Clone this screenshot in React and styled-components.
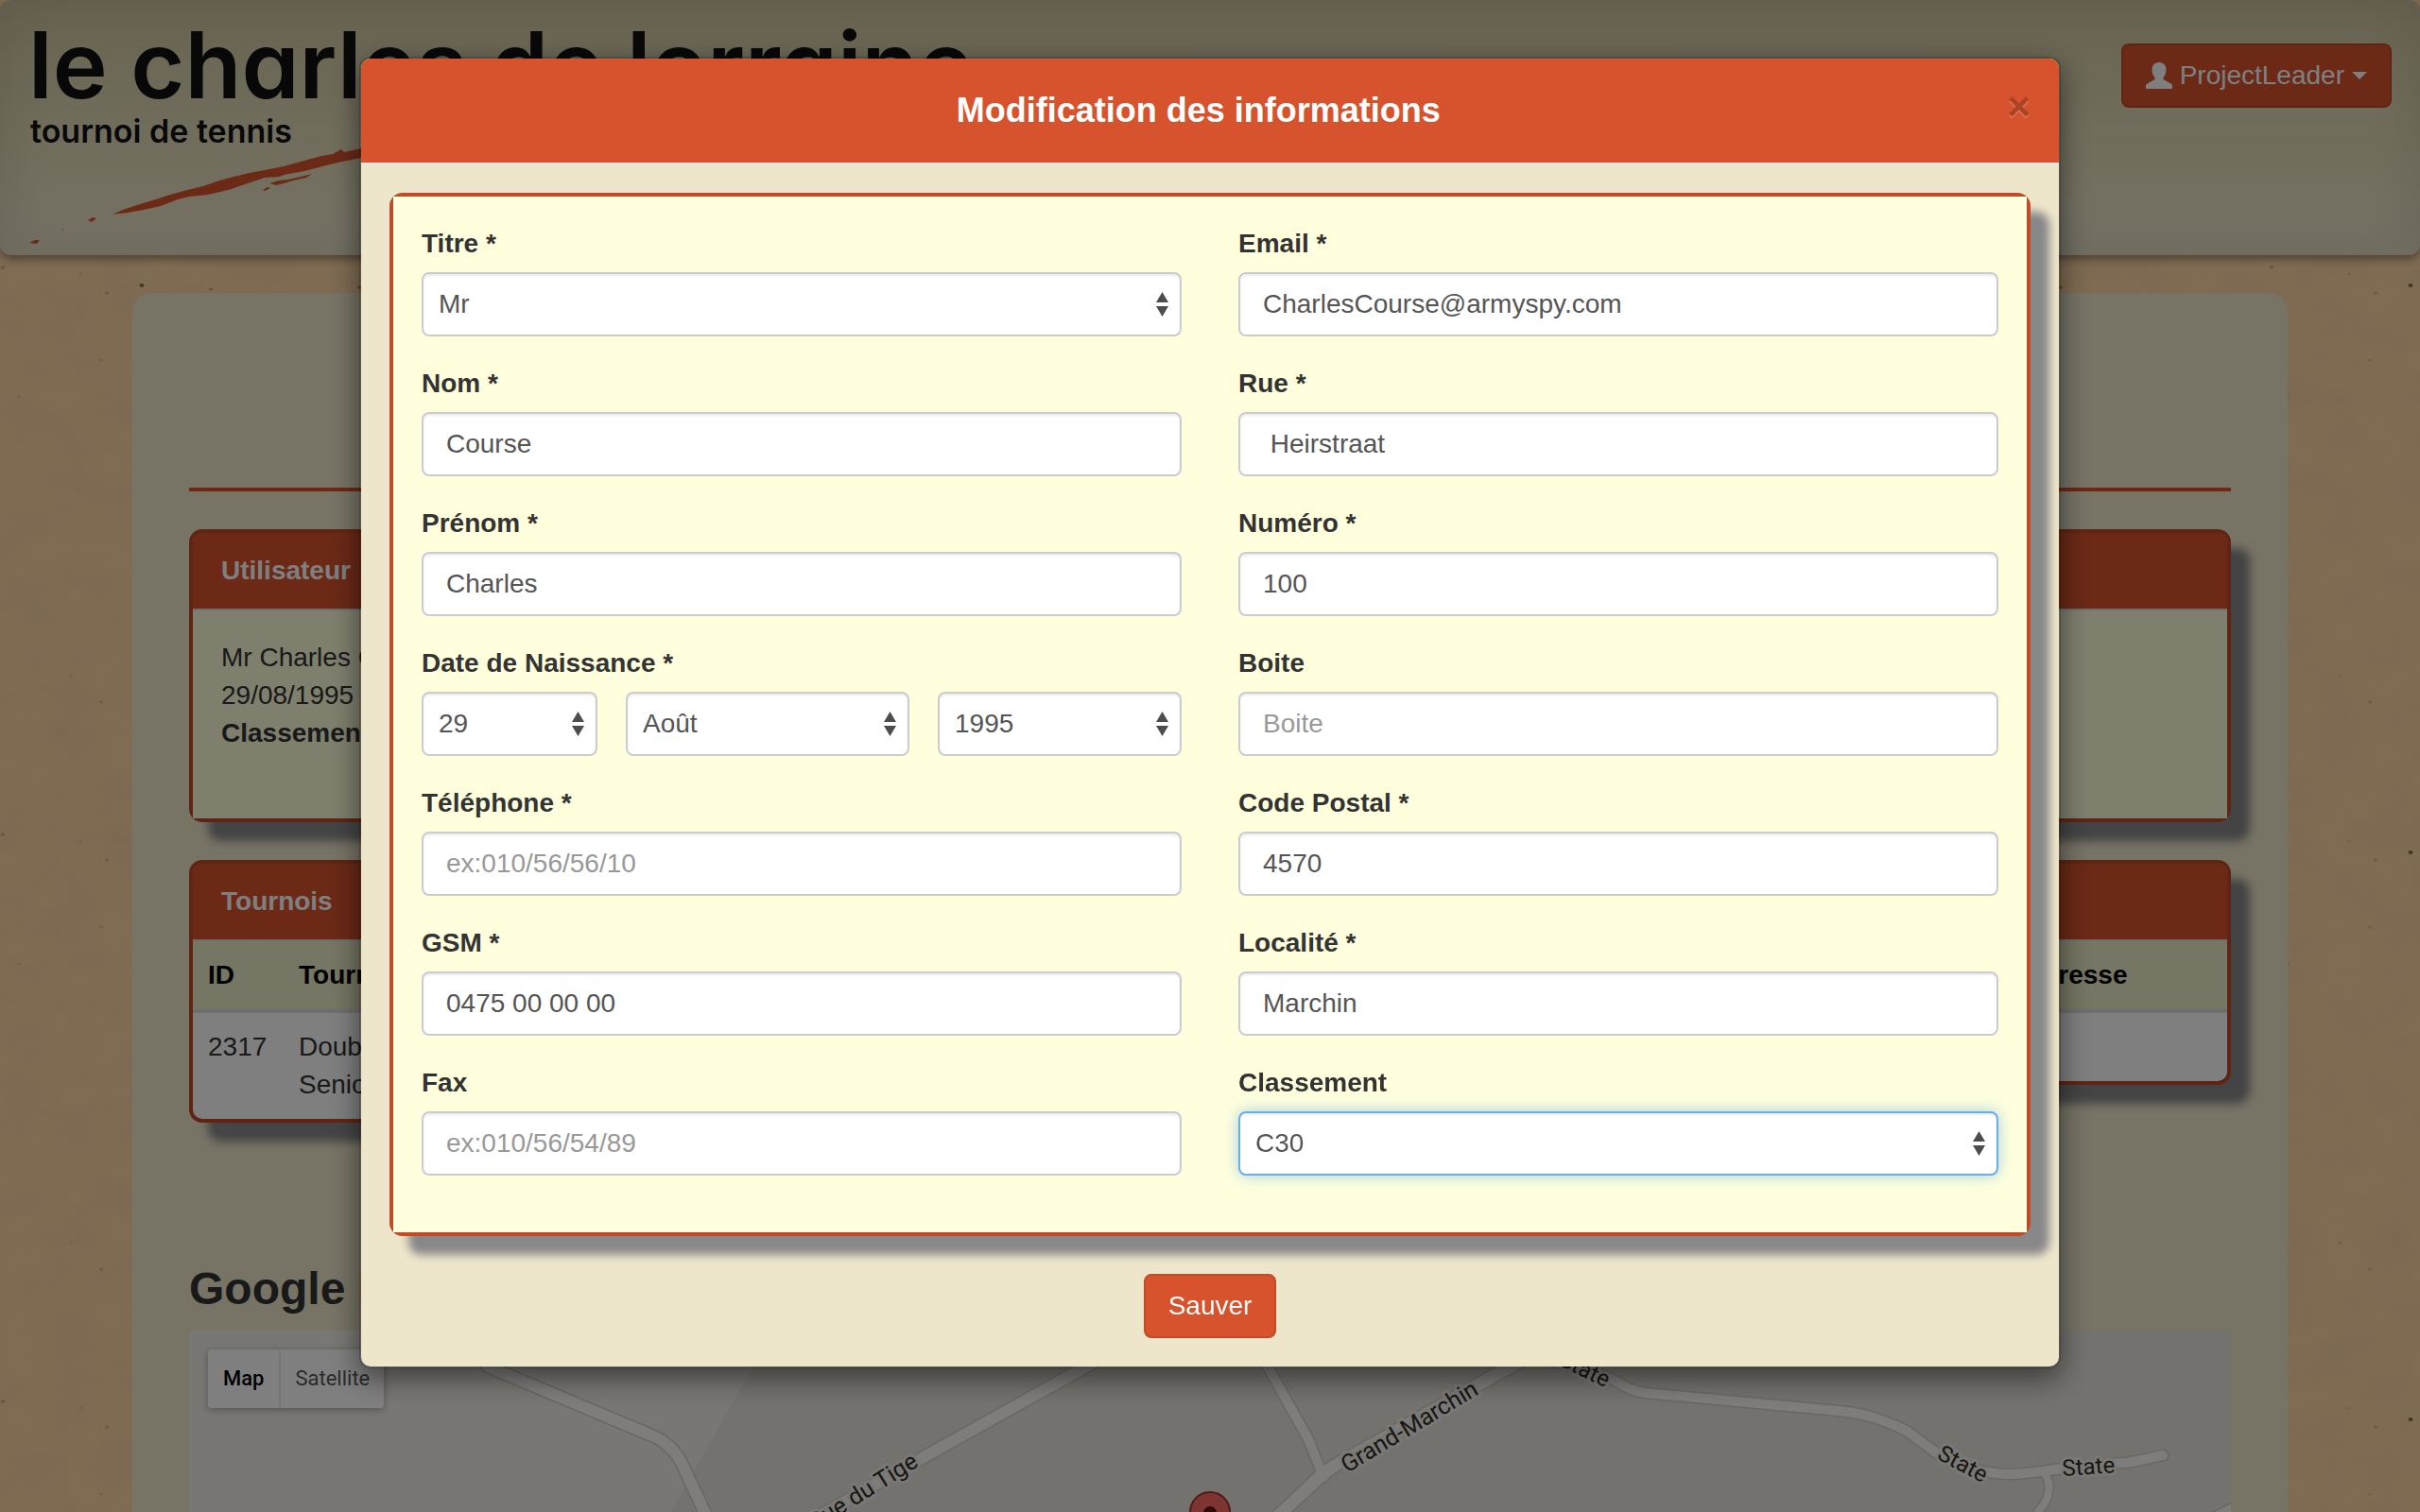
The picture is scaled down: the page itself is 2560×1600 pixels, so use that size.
import React from "react";
import styled, { createGlobalStyle, css } from "styled-components";

const orange = "#d6532d";
const rust = "#bf4b28";
const sand = "#eee6cb";
const cream = "#ffffdd";

const GlobalStyle = createGlobalStyle`
  *, *::before, *::after { box-sizing: border-box; }
  html, body, #root { height: 100%; }
  body {
    margin: 0;
    overflow: hidden;
    background: #ffd8a6;
    color: #333;
    font: 28px/40px "Liberation Sans", Arial, sans-serif;
  }
  input, select, button { font: inherit; }
`;

/* ---------- page ---------- */

const Page = styled.div`
  position: relative;
  display: flex;
  flex-direction: column;
  min-height: 100vh;
  height: 100vh;
  overflow: hidden;
`;

const Texture = styled.svg`
  position: absolute;
  inset: 0;
  width: 100%;
  height: 100%;
`;

const Banner = styled.header`
  position: relative;
  display: flex;
  justify-content: space-between;
  align-items: flex-start;
  flex: none;
  height: 270px;
  border-radius: 12px;
  background: linear-gradient(#d2c7a2, #e0dab8 50%, #ece5cc);
  box-shadow: inset 0 0 60px rgba(0, 0, 0, 0.1), 0 4px 10px rgba(0, 0, 0, 0.4);
`;

const Brand = styled.a`
  display: flex;
  flex-direction: column;
  padding: 12px 0 0 30px;
  color: #111;
  text-decoration: none;
  font-family: Inter, "Liberation Sans", sans-serif;
  font-feature-settings: "cv11";
  font-weight: 600;
`;

const BrandName = styled.span`
  font-size: 98px;
  line-height: 114px;
  white-space: nowrap;
`;

const BrandLine = styled.span`
  padding-left: 2px;
  font-size: 34px;
  line-height: 26px;
`;

const Brush = styled.svg`
  width: 500px;
  height: 110px;
  margin-left: -30px;
`;

const Button = styled.button`
  display: inline-flex;
  align-items: center;
  gap: 8px;
  height: 68px;
  padding: 0 24px;
  border: 2px solid ${rust};
  border-radius: 8px;
  background: ${orange};
  color: #fff;
  line-height: 40px;
  cursor: pointer;
`;

const Account = styled.div`
  padding: 46px 30px 0 0;
`;

const Content = styled.main`
  position: relative;
  display: flex;
  flex-direction: column;
  flex: 1;
  min-height: 0;
  margin: 40px 140px 0;
  padding: 0 60px;
  border-radius: 20px 20px 0 0;
  background: ${sand};
`;

const PageHeader = styled.div`
  flex: none;
  height: 210px;
  margin-bottom: 40px;
  border-bottom: 4px solid ${orange};
`;

const Columns = styled.div`
  display: grid;
  grid-template-columns: 1fr 1fr;
  align-items: start;
  gap: 40px 60px;
`;

const Panel = styled.section`
  border: 4px solid ${rust};
  border-radius: 14px;
  background: ${(p) => p.$fill || cream};
  box-shadow: 20px 20px 10px #888;
`;

const PanelTitle = styled.h2`
  margin: 0;
  padding: 20px 30px;
  border-bottom: 2px solid #ddd;
  border-radius: 8px 8px 0 0;
  background: ${orange};
  color: #fff;
  font-size: 28px;
  line-height: 40px;
`;

const PanelBody = styled.div`
  min-height: 220px;
  padding: 30px;
  background: ${cream};
`;

const Table = styled.table`
  width: 100%;
  border-collapse: separate;
  border-spacing: 0;
  table-layout: fixed;
  text-align: left;
`;

const Th = styled.th`
  width: ${(p) => p.$width || "auto"};
  padding: 16px;
  border-bottom: 4px solid #ddd;
  background: #ebecc6;
  color: #000;
`;

const Td = styled.td`
  height: 72px;
  padding: 16px;
  vertical-align: top;
`;

const SectionTitle = styled.h3`
  flex: none;
  margin: 150px 0 18px;
  font-size: 48px;
  line-height: 52px;
`;

const MapFrame = styled.div`
  position: relative;
  flex: 1;
  min-height: 0;
  overflow: hidden;
  background: #e7e4dc;
`;

const MapDrawing = styled.svg`
  display: block;
  width: 100%;
  height: 100%;
  font-family: Roboto, sans-serif;
`;

const MapTypes = styled.div`
  position: absolute;
  top: 20px;
  left: 20px;
  display: flex;
  border-radius: 4px;
  box-shadow: 0 2px 8px rgba(0, 0, 0, 0.3);
`;

const MapType = styled.button`
  height: 62px;
  padding: 0 ${(p) => (p.$on ? 16 : 15)}px;
  border: 0;
  border-left: ${(p) => (p.$on ? "0" : "2px solid #ececec")};
  border-radius: ${(p) => (p.$on ? "4px 0 0 4px" : "0 4px 4px 0")};
  background: #fff;
  color: ${(p) => (p.$on ? "#000" : "#565656")};
  font-family: Roboto, sans-serif;
  font-size: 22px;
  font-weight: ${(p) => (p.$on ? 500 : 400)};
`;

/* ---------- dialog ---------- */

const Backdrop = styled.div`
  position: fixed;
  inset: 0;
  display: flex;
  justify-content: center;
  align-items: flex-start;
  padding: 60px 20px;
  background: rgba(0, 0, 0, 0.5);
`;

const Dialog = styled.form`
  width: 100%;
  max-width: 1800px;
  border: 2px solid rgba(0, 0, 0, 0.2);
  border-radius: 12px;
  background: ${sand};
  background-clip: padding-box;
  box-shadow: 0 10px 30px rgba(0, 0, 0, 0.5);
`;

const DialogHeader = styled.div`
  display: flex;
  align-items: flex-start;
  padding: 30px;
  border-bottom: 2px solid #e5e5e5;
  border-radius: 10px 10px 0 0;
  background: ${orange};
`;

const DialogTitle = styled.h1`
  flex: 1;
  margin: 0;
  color: #fff;
  font-size: 36px;
  line-height: 50px;
  text-align: center;
`;

const Close = styled.button`
  padding: 0;
  border: 0;
  background: none;
  color: #000;
  font-size: 42px;
  font-weight: bold;
  line-height: 42px;
  text-shadow: 0 2px 0 #fff;
  opacity: 0.2;
  cursor: pointer;
`;

const DialogBody = styled.div`
  display: flex;
  flex-direction: column;
  gap: 40px;
  padding: 30px;
`;

const Fields = styled.div`
  display: grid;
  grid-template-columns: 1fr 1fr;
  gap: 60px;
  padding: 30px;
  background: ${cream};
`;

const Column = styled.div`
  display: flex;
  flex-direction: column;
  gap: 30px;
  padding-bottom: 30px;
`;

const Group = styled.div`
  display: flex;
  flex-direction: column;
  gap: 10px;
`;

const Label = styled.label`
  font-weight: bold;
`;

const control = css`
  display: block;
  width: 100%;
  height: 68px;
  border: 2px solid #ccc;
  border-radius: 8px;
  background: #fff;
  color: #555;
  line-height: 40px;
  box-shadow: inset 0 2px 2px rgba(0, 0, 0, 0.075);
  &:focus {
    outline: 0;
    border-color: #66afe9;
    box-shadow: inset 0 2px 2px rgba(0, 0, 0, 0.075), 0 0 16px rgba(102, 175, 233, 0.6);
  }
`;

const Input = styled.input`
  ${control}
  padding: 12px 24px;
  &::placeholder { color: #999; opacity: 1; }
`;

const SelectBox = styled.div`
  position: relative;
`;

const NativeSelect = styled.select`
  ${control}
  appearance: none;
  padding: 12px 16px;
`;

const Arrows = styled.svg`
  position: absolute;
  top: 21px;
  right: 14px;
  width: 13px;
  height: 26px;
  fill: #4d4d4d;
  pointer-events: none;
`;

const DateRow = styled.div`
  display: grid;
  grid-template-columns: 31fr 50fr 43fr;
  gap: 30px;
`;

const Actions = styled.div`
  display: flex;
  justify-content: center;
`;

function Select({ options, ...rest }) {
  return (
    <SelectBox>
      <NativeSelect {...rest}>
        {options.map((o) => (
          <option key={o}>{o}</option>
        ))}
      </NativeSelect>
      <Arrows viewBox="0 0 13 26" aria-hidden="true">
        <path d="M6.500 0 13 11H0zM0 15h13L6.500 26z" />
      </Arrows>
    </SelectBox>
  );
}

function Field({ id, label, children, ...rest }) {
  return (
    <Group>
      <Label htmlFor={id}>{label}</Label>
      {children || <Input id={id} {...rest} />}
    </Group>
  );
}

const specks = [
  [150, 302, 2.5, 0.6], [113, 310, 2, 0.2], [107, 381, 2, 0.12], [107, 143, 2, 0.2],
  [598, 68, 2.5, 0.2], [598, 480, 2.5, 0.2], [3, 283, 2.5, 0.2], [223, 306, 2, 0.3],
  [380, 304, 2, 0.4], [75, 115, 2, 0.1], [85, 290, 2, 0.1], [20, 420, 2, 0.1],
];

function Paper() {
  return (
    <Texture aria-hidden="true">
      <defs>
        <filter id="mottle" x="0" y="0" width="100%" height="100%">
          <feTurbulence type="fractalNoise" baseFrequency="0.02 0.03" numOctaves="5" seed="4" />
          <feColorMatrix values="0 0 0 0 0.8  0 0 0 0 0.5  0 0 0 0 0.34  1.2 0 0 0 -0.3" />
        </filter>
        <pattern id="specks" width="600" height="600" patternUnits="userSpaceOnUse">
          {specks.map(([x, y, r, o]) => (
            <ellipse key={`${x}-${y}`} cx={x} cy={y} rx={r} ry={r - 0.5} fill="#3a2408" opacity={o} />
          ))}
        </pattern>
      </defs>
      <rect width="100%" height="100%" filter="url(#mottle)" opacity="0.25" />
      <rect width="100%" height="100%" fill="url(#specks)" />
    </Texture>
  );
}

function BrushStroke() {
  return (
    <Brush viewBox="0 152 500 110" fill={orange} aria-hidden="true">
      <path d="M119 227 130 222 148 216 165 211 180 206 198 201 215 197 229 192 247 187 264 183 280 180 300 176 322 170 340 165 352 163 361 158 364 161 382 157 450 142 490 134 480 144 430 158 382 167 362 171 345 175 322 181 300 185 296 187 280 188 262 194 245 200 233 203 220 206 200 208 188 211 170 218 152 222 135 225z" />
      <path d="M285 194 295 191 305 190 318 187 330 184 324 188 310 191 300 194 292 196zM278 201 283 198 286 199 280 202z" />
      <path d="M93 233 98 230 102 231 97 235zM31 257 37 254 42 254 39 258z" />
      <circle cx="66" cy="243" r="1" opacity="0.5" />
    </Brush>
  );
}

const roads = [
  { w: 15, d: "M316 38 494 113Q510 121 520 138L549 200" },
  { w: 15, d: "M660 200 770 138 949 38 1010 4" },
  { w: 13, d: "M1125 0 1141 38 1184 115 1200 155" },
  { w: 16, d: "M1150 198 1197 154Q1210 143 1228 134L1398 38 1450 8" },
  { w: 13, d: "M1400 26Q1470 34 1510 54 1526 64 1540 66L1745 85Q1770 88 1782 92 1806 100 1818 107L1852 132Q1880 150 1924 152 1940 152 1974 147L2056 139 2088 132" },
  { w: 11, d: "M1964 152Q1972 168 1962 184L1953 196" },
  { w: 13, d: "M2130 204 2170 184" },
];

const labels = [
  { x: 662, y: 212, a: -32, s: 25, t: "Rue du Tige" },
  { x: 1225, y: 151, a: -31, s: 25, t: "Grand-Marchin" },
  { x: 1448, y: 36, a: 26, s: 24, t: "State" },
  { x: 1848, y: 135, a: 28, s: 24, t: "State" },
  { x: 1982, y: 154, a: -4, s: 24, t: "State" },
];

function MapView() {
  return (
    <MapFrame>
      <MapDrawing viewBox="0 0 2160 192" preserveAspectRatio="xMidYMin slice">
        <path d="M0 0H618L505 200H0z" fill="#f2efe8" />
        <g fill="none" strokeLinecap="round" strokeLinejoin="round">
          {roads.map((r) => (
            <path key={r.d} d={r.d} stroke="#d3cfc3" strokeWidth={r.w} />
          ))}
          {roads.map((r) => (
            <path key={r.d} d={r.d} stroke="#fdfaf8" strokeWidth={r.w - 3} />
          ))}
        </g>
        {labels.map((l) => (
          <text
            key={l.x}
            transform={`translate(${l.x} ${l.y}) rotate(${l.a})`}
            fontSize={l.s}
            fill="#2e2c24"
            stroke="#f4f1ec"
            strokeWidth="6"
            strokeLinejoin="round"
            paintOrder="stroke"
          >
            {l.t}
          </text>
        ))}
        <path d="M1080 250C1078 225 1059 212 1059 192A21 21 0 0 1 1101 192C1101 212 1082 225 1080 250z" fill="#fb6b62" stroke="#a8312a" strokeWidth="2" />
        <circle cx="1080" cy="193" r="7" fill="#5e140f" />
      </MapDrawing>
      <MapTypes>
        <MapType type="button" $on>Map</MapType>
        <MapType type="button">Satellite</MapType>
      </MapTypes>
    </MapFrame>
  );
}

export default function App() {
  return (
    <>
      <GlobalStyle />
      <Page>
        <Paper />
        <Banner>
          <Brand href="#">
            <BrandName>le charles de lorraine</BrandName>
            <BrandLine>tournoi de tennis</BrandLine>
            <BrushStroke />
          </Brand>
          <Account>
            <Button type="button">
              <svg width="28" height="28" viewBox="0 0 28 28" fill="currentColor" aria-hidden="true">
                <path d="M14 0c4.500 0 7.500 3 7.500 7.500 0 4-1.200 6.500-3 8.500v2l8 4.500c1 .6 1.500 1.200 1.500 2.500v3H0v-3c0-1.300.5-1.900 1.500-2.500l8-4.500v-2c-1.800-2-3-4.500-3-8.500C6.500 3 9.500 0 14 0z" />
              </svg>
              ProjectLeader
              <svg width="16" height="8" viewBox="0 0 16 8" fill="currentColor" aria-hidden="true">
                <path d="M0 0h16L8 8z" />
              </svg>
            </Button>
          </Account>
        </Banner>

        <Content>
          <PageHeader />
          <Columns>
            <Panel>
              <PanelTitle>Utilisateur</PanelTitle>
              <PanelBody>
                Mr Charles Course
                <br />
                29/08/1995
                <br />
                <strong>Classement</strong>
              </PanelBody>
            </Panel>
            <Panel>
              <PanelTitle>&nbsp;</PanelTitle>
              <PanelBody />
            </Panel>
            <Panel $fill="#fff">
              <PanelTitle>Tournois</PanelTitle>
              <Table>
                <thead>
                  <tr>
                    <Th $width="96px">ID</Th>
                    <Th>Tournoi</Th>
                  </tr>
                </thead>
                <tbody>
                  <tr>
                    <Td>2317</Td>
                    <Td>
                      Double
                      <br />
                      Senior
                    </Td>
                  </tr>
                </tbody>
              </Table>
            </Panel>
            <Panel $fill="#fff">
              <PanelTitle>&nbsp;</PanelTitle>
              <Table>
                <thead>
                  <tr>
                    <Th />
                    <Th $width="232px">Adresse</Th>
                  </tr>
                </thead>
                <tbody>
                  <tr>
                    <Td />
                    <Td />
                  </tr>
                </tbody>
              </Table>
            </Panel>
          </Columns>
          <SectionTitle>Google Map</SectionTitle>
          <MapView />
        </Content>
      </Page>

      <Backdrop>
        <Dialog role="dialog" aria-labelledby="dialog-title" onSubmit={(e) => e.preventDefault()}>
          <DialogHeader>
            <DialogTitle id="dialog-title">Modification des informations</DialogTitle>
            <Close type="button" aria-label="Fermer">×</Close>
          </DialogHeader>
          <DialogBody>
            <Panel>
              <Fields>
                <Column>
                  <Field id="titre" label="Titre *">
                    <Select id="titre" options={["Mr", "Mme"]} />
                  </Field>
                  <Field id="nom" label="Nom *" defaultValue="Course" />
                  <Field id="prenom" label="Prénom *" defaultValue="Charles" />
                  <Field id="jour" label="Date de Naissance *">
                    <DateRow>
                      <Select id="jour" options={["29"]} />
                      <Select aria-label="Mois" options={["Août"]} />
                      <Select aria-label="Année" options={["1995"]} />
                    </DateRow>
                  </Field>
                  <Field id="telephone" label="Téléphone *" placeholder="ex:010/56/56/10" />
                  <Field id="gsm" label="GSM *" defaultValue="0475 00 00 00" />
                  <Field id="fax" label="Fax" placeholder="ex:010/56/54/89" />
                </Column>
                <Column>
                  <Field id="email" label="Email *" defaultValue="CharlesCourse@armyspy.com" />
                  <Field id="rue" label="Rue *" defaultValue=" Heirstraat" />
                  <Field id="numero" label="Numéro *" defaultValue="100" />
                  <Field id="boite" label="Boite" placeholder="Boite" />
                  <Field id="postal" label="Code Postal *" defaultValue="4570" />
                  <Field id="localite" label="Localité *" defaultValue="Marchin" />
                  <Field id="classement" label="Classement">
                    <Select id="classement" options={["C30"]} autoFocus />
                  </Field>
                </Column>
              </Fields>
            </Panel>
            <Actions>
              <Button type="submit">Sauver</Button>
            </Actions>
          </DialogBody>
        </Dialog>
      </Backdrop>
    </>
  );
}
